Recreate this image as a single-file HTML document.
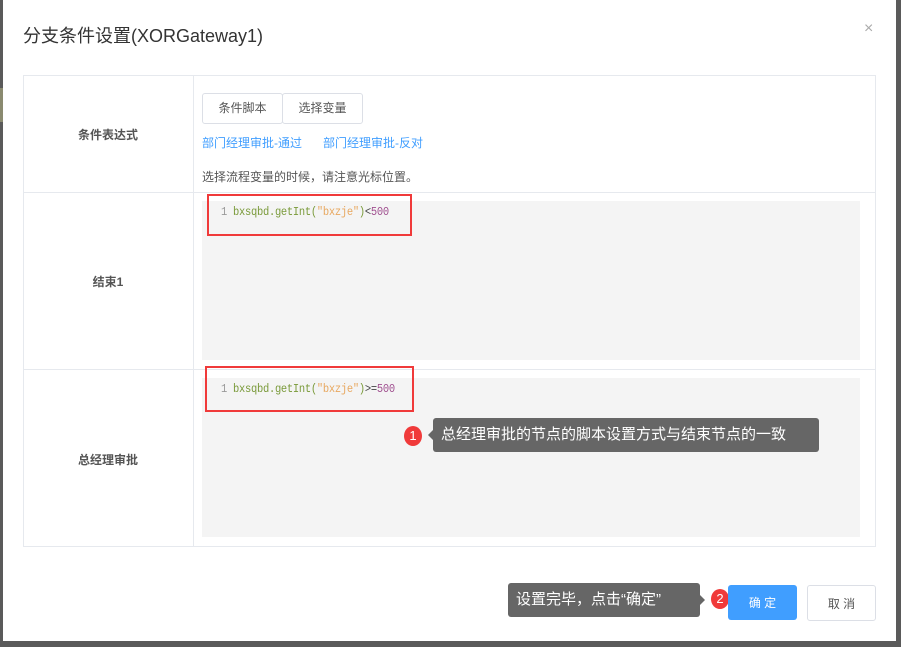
<!DOCTYPE html>
<html><head><meta charset="utf-8"><style>
body{margin:0;width:901px;height:647px;background:#5a5a5a;position:relative;overflow:hidden;font-family:"Liberation Sans","Noto Sans CJK SC",sans-serif}
.a{position:absolute}
.dlg{left:3px;top:0;width:893px;height:641px;background:#fff}
.title{left:23px;top:22px;font-size:18px;color:#333}
.close{left:864px;top:20px;font-size:16px;color:#aaa}
.tbl{left:23px;top:75px;width:851px;height:470px;border:1px solid #e6e9ee}
.hl{height:1px;background:#e6e9ee;left:23px;width:852px}
.vl{width:1px;background:#e6e9ee;left:193px;top:75px;height:471px}
.lab{font-size:12px;font-weight:bold;color:#555;width:170px;text-align:center;left:23px}
.btn{top:93px;height:29px;border:1px solid #dcdfe6;border-radius:3px;font-size:12px;color:#555;line-height:29px;text-align:center;background:#fff}
.link{font-size:12px;color:#409eff;top:134px}
.code{background:#f4f4f4;left:202px;width:658px}
.ln{font-family:"Liberation Mono",monospace;font-size:11.6px;color:#7a9a3a;letter-spacing:-0.3px;transform:scaleX(0.9);transform-origin:left top;white-space:nowrap}
.red{border:2px solid #f03a3a}
.tip{background:#666;color:#fff;font-size:15px;border-radius:3px;padding:0 8px;line-height:34px;height:34px}
.badge{width:18px;height:20px;border-radius:50%;background:#f03a3a;color:#fff;font-size:13px;text-align:center;line-height:20px}
.arl{width:0;height:0;border-top:5px solid transparent;border-bottom:5px solid transparent;border-right:5px solid #666}
.arr{width:0;height:0;border-top:5px solid transparent;border-bottom:5px solid transparent;border-left:5px solid #666}
</style></head><body>
<div class="a" style="left:0;top:88px;width:3px;height:34px;background:#8a8a70"></div>
<div class="a dlg"></div>
<div class="a title">分支条件设置(XORGateway1)</div>
<div class="a close">×</div>
<div class="a tbl"></div>
<div class="a hl" style="top:192px"></div>
<div class="a hl" style="top:369px"></div>
<div class="a vl"></div>
<div class="a lab" style="top:126px">条件表达式</div>
<div class="a lab" style="top:273px">结束1</div>
<div class="a lab" style="top:451px">总经理审批</div>
<div class="a btn" style="left:202px;width:79px">条件脚本</div>
<div class="a btn" style="left:282px;width:79px">选择变量</div>
<div class="a link" style="left:202px">部门经理审批-通过</div>
<div class="a link" style="left:323px">部门经理审批-反对</div>
<div class="a" style="left:202px;top:168px;font-size:12px;color:#555">选择流程变量的时候，请注意光标位置。</div>
<div class="a code" style="top:201px;height:159px"></div>
<div class="a code" style="top:378px;height:159px"></div>
<div class="a ln" style="left:221px;top:206px"><span style="color:#999">1</span> bxsqbd.getInt(<span style="color:#e8a860">"bxzje"</span>)<span style="color:#444">&lt;</span><span style="color:#a05090">500</span></div>
<div class="a ln" style="left:221px;top:383px"><span style="color:#999">1</span> bxsqbd.getInt(<span style="color:#e8a860">"bxzje"</span>)<span style="color:#444">&gt;=</span><span style="color:#a05090">500</span></div>
<div class="a red" style="left:207px;top:194px;width:201px;height:38px"></div>
<div class="a red" style="left:205px;top:366px;width:205px;height:42px"></div>
<div class="a badge" style="left:404px;top:426px">1</div>
<div class="a arl" style="left:428px;top:430px"></div>
<div class="a tip" style="left:433px;top:418px;width:370px">总经理审批的节点的脚本设置方式与结束节点的一致</div>
<div class="a tip" style="left:508px;top:583px;width:176px">设置完毕，点击“确定”</div>
<div class="a arr" style="left:700px;top:595px"></div>
<div class="a badge" style="left:711px;top:589px">2</div>
<div class="a" style="left:728px;top:585px;width:69px;height:35px;background:#409eff;border-radius:3px;color:#fff;font-size:12px;line-height:37px;text-align:center">确 定</div>
<div class="a" style="left:807px;top:585px;width:67px;height:34px;border:1px solid #dcdfe6;border-radius:3px;color:#555;font-size:12px;line-height:36px;text-align:center">取 消</div>
</body></html>
